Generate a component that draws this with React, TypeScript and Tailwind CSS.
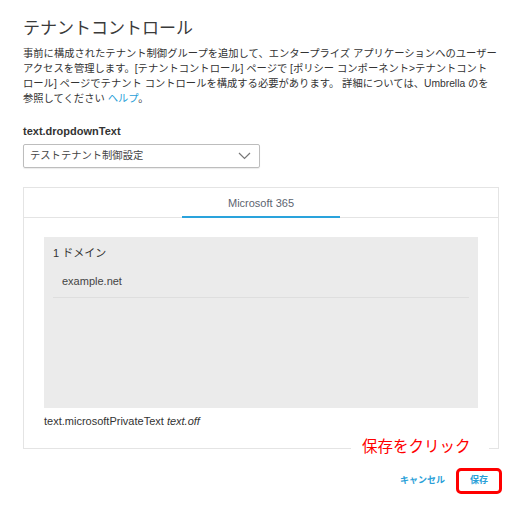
const jp = { fontFamily: '"Liberation Sans", "Noto Sans CJK JP", sans-serif' };

const Chevron = () => (
  <svg width="13" height="8" viewBox="0 0 13 8" fill="none">
    <path d="M1 1l5.5 5.5L12 1" stroke="#777" strokeWidth="1.2" />
  </svg>
);

export default function App() {
  return (
    <div className="relative w-[524px] h-[512px] bg-white pl-[23px] pr-[23px] pt-[17px] text-[#333]" style={jp}>
      <h1 className="text-[17px] leading-[24px] text-[#3a3a3a] font-normal">テナントコントロール</h1>
      <p className="mt-[5px] text-[10.3px] leading-[15px] text-[#333] whitespace-nowrap">
        事前に構成されたテナント制御グループを追加して、エンタープライズ アプリケーションへのユーザー
        <br />
        アクセスを管理します。[テナントコントロール] ページで [ポリシー コンポーネント&gt;テナントコント
        <br />
        ロール] ページでテナント コントロールを構成する必要があります。 詳細については、Umbrella のを
        <br />
        参照してください <span className="text-[#2a9fd8]">ヘルプ</span>。
      </p>

      <div className="mt-[18px] text-[11px] leading-[14px] font-bold text-[#333]">text.dropdownText</div>
      <div className="mt-[6px] w-[237px] h-[24px] border border-[#bdbdbd] rounded-[2px] flex items-center justify-between pl-[6px] pr-[8px] shadow-[0_1px_1px_rgba(0,0,0,0.08)]">
        <span className="text-[10.3px] text-[#444]">テストテナント制御設定</span>
        <Chevron />
      </div>

      <div className="mt-[19px] w-[476px] h-[262px] border border-[#e4e4e4] flex flex-col">
        <div className="h-[30px] border-b border-[#e4e4e4] flex justify-center">
          <div className="w-[158px] h-[30px] border-b-[2px] border-[#2aa3dc] -mb-px flex items-center justify-center pt-[2px] text-[11px] text-[#5d6470]">
            Microsoft 365
          </div>
        </div>
        <div className="px-[20px] pt-[19px] flex flex-col">
          <div className="h-[171px] bg-[#ebebeb] px-[9px] pt-[8px]">
            <div className="text-[11px] leading-[16px] text-[#333]">1 ドメイン</div>
            <div className="mt-[12px] pl-[9px] text-[11px] leading-[16px] text-[#444]">example.net</div>
            <div className="mt-[8px] h-px bg-[#dedede]" />
          </div>
          <div className="mt-[6px] text-[11px] leading-[14px] text-[#333]">
            text.microsoftPrivateText <i>text.off</i>
          </div>
        </div>
      </div>

      <div className="mt-[19px] flex items-center justify-end gap-[11px] -mr-[1px]">
        <span className="text-[9px] font-bold text-[#2a9fd8]">キャンセル</span>
        <div className="w-[46px] h-[26px] border-[3px] border-[#ff0000] rounded-[5px] flex items-center justify-center text-[9px] font-bold text-[#2a9fd8]">
          保存
        </div>
      </div>

      <div className="absolute left-[351px] top-[431px] w-[138px] h-[32px] bg-white pl-[11px] flex items-center text-[15.5px] text-[#ff0000]">
        保存をクリック
      </div>
    </div>
  );
}
